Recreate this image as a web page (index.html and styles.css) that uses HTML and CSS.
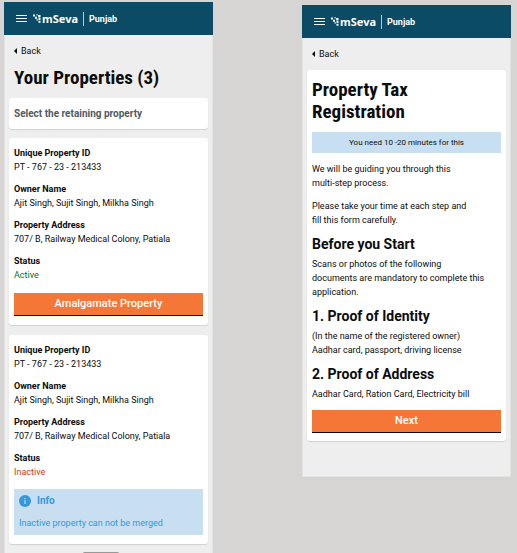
FILE: index.html
```html
<!DOCTYPE html>
<html lang="en">
<head>
<meta charset="utf-8">
<meta name="viewport" content="width=device-width, initial-scale=1">
<title>mSeva Punjab</title>
<link rel="stylesheet" href="styles.css">
</head>
<body>
<svg class="defs" aria-hidden="true">
  <symbol id="menu" viewBox="0 0 12 8"><path d="M0 0h11v1H0zM0 3h11v1H0zM0 6h11v1H0z"/></symbol>
  <symbol id="mark" viewBox="0 0 8 10"><path d="M0 .5h2v2H0zM2 2.800h2v2H2zM3.500.2h1.200v1.200H3.500zM5.200 1h2.300v2.400H5.200zM5.500 4.100h2v2h-2zM3.500 5.200h1.400v1.400H3.500zM5.500 6.800h2v2h-2z"/></symbol>
</svg>
<main class="board">
  <section class="phone">
    <header class="bar">
      <button class="menu" aria-label="Menu"><svg><use href="#menu"/></svg></button>
      <svg class="mark" aria-hidden="true"><use href="#mark"/></svg>
      <span class="brand">mSeva</span>
      <span class="state">Punjab</span>
    </header>
    <a class="back" href="#">Back</a>
    <h1 class="title page-title">Your Properties (3)</h1>
    <div class="card prompt">Select the retaining property</div>
    <article class="card">
      <dl class="details">
        <div><dt>Unique Property ID</dt><dd>PT - 767 - 23 - 213433</dd></div>
        <div><dt>Owner Name</dt><dd>Ajit Singh, Sujit Singh, Milkha Singh</dd></div>
        <div><dt>Property Address</dt><dd>707/ B, Railway Medical Colony, Patiala</dd></div>
        <div><dt>Status</dt><dd class="active">Active</dd></div>
      </dl>
      <button class="action">Amalgamate Property</button>
    </article>
    <article class="card">
      <dl class="details">
        <div><dt>Unique Property ID</dt><dd>PT - 767 - 23 - 213433</dd></div>
        <div><dt>Owner Name</dt><dd>Ajit Singh, Sujit Singh, Milkha Singh</dd></div>
        <div><dt>Property Address</dt><dd>707/ B, Railway Medical Colony, Patiala</dd></div>
        <div><dt>Status</dt><dd class="inactive">Inactive</dd></div>
      </dl>
      <div class="info">
        <div class="info-head">
          <svg viewBox="0 0 12 12" aria-hidden="true"><circle cx="6" cy="6" r="6" fill="#3498db"/><path d="M5.400 5.200h1.200V9H5.400zM5.400 3h1.200v1.200H5.400z" fill="#c7dff1"/></svg>
          <strong>Info</strong>
        </div>
        <p>Inactive property can not be merged</p>
      </div>
    </article>
    <div class="handle"></div>
  </section>

  <section class="phone guide">
    <header class="bar">
      <button class="menu" aria-label="Menu"><svg><use href="#menu"/></svg></button>
      <svg class="mark" aria-hidden="true"><use href="#mark"/></svg>
      <span class="brand">mSeva</span>
      <span class="state">Punjab</span>
    </header>
    <a class="back" href="#">Back</a>
    <article class="card">
      <h1 class="title">Property Tax Registration</h1>
      <p class="banner">You need 10 -20 minutes for this</p>
      <p class="intro">We will be guiding you through this<br>multi-step process.</p>
      <p class="intro">Please take your time at each step and<br>fill this form carefully.</p>
      <h2>Before you Start</h2>
      <p>Scans or photos of the following<br>documents are mandatory to complete this<br>application.</p>
      <h2>1. Proof of Identity</h2>
      <p>(In the name of the registered owner)<br>Aadhar card, passport, driving license</p>
      <h2>2. Proof of Address</h2>
      <p>Aadhar Card, Ration Card, Electricity bill</p>
      <button class="action">Next</button>
    </article>
  </section>
</main>
</body>
</html>
```
FILE: styles.css
```css
* { box-sizing: border-box; }
body {
  margin: 0;
  background: #d6d5d3;
  color: #0b0c0c;
  font: 9px/14px Roboto, sans-serif;
}
h1, h2, p, dl, dd { margin: 0; }
button { border: 0; padding: 0; font: inherit; color: inherit; }
.defs { display: none; }
.board {
  display: grid;
  grid-template-columns: 1fr 1fr;
  column-gap: 89px;
  align-items: start;
  height: 100vh;
  overflow: hidden;
  padding: 2px 6px 0 4px;
}
.phone {
  background: #eee;
  border: 1px solid #e3e3e2;
  border-top: 0;
}
.guide { margin-top: 3px; padding-bottom: 25px; }
.bar {
  display: flex;
  align-items: center;
  height: 33px;
  margin: 0 -1px;
  padding-left: 12px;
  background: #0b4b66;
  color: #fff;
}
.menu { width: 12px; height: 8px; background: none; display: flex; }
.menu svg { width: 12px; height: 8px; fill: #fff; }
.mark { width: 8px; height: 10px; margin-left: 5px; fill: #fff; }
.brand { margin-left: 1px; font: 700 11px/14px "Noto Sans", sans-serif; }
.state {
  margin-left: 5px;
  padding: 0 5px;
  border-left: 1px solid #b6c9d1;
  font-weight: 700;
}
.back {
  display: flex;
  align-items: center;
  gap: 4px;
  margin: 9px 9px 0;
  color: #0b0c0c;
  text-decoration: none;
}
.back::before {
  content: "";
  border: 3px solid transparent;
  border-right-color: #0b0c0c;
  border-left: 0;
}
.title {
  font: 700 19px/22px "Roboto Condensed", Roboto, sans-serif;
}
.page-title { margin: 9px 9px; }
.card {
  margin: 0 4px 10px;
  padding: 8px 5px 9px;
  background: #fff;
  border-radius: 3px;
  box-shadow: 0 1px 1px #d2d2d2;
}
.prompt {
  margin-bottom: 9px;
  padding: 8px 5px;
  color: #505a5f;
  font-size: 10px;
  line-height: 15px;
  font-weight: 700;
}
.details { display: grid; gap: 8px; }
dt { font-weight: 700; }
.active { color: #00703c; }
.inactive { color: #d4351c; }
.action {
  display: block;
  width: 100%;
  height: 23px;
  margin-top: 11px;
  background: #f47738;
  border-bottom: 1px solid #0b0c0c;
  color: #fff;
  font-size: 11px;
  font-weight: 500;
}
.info {
  margin-top: 10px;
  padding: 5px;
  background: #c7dff1;
  color: #3498db;
}
.info-head { display: flex; align-items: center; gap: 6px; font-size: 10px; margin-bottom: 8px; }
.info-head svg { width: 12px; height: 12px; }
.handle {
  width: 36px;
  height: 3px;
  margin: -2px auto 0 78px;
  border-radius: 2px;
  background: #999;
}
.guide .back { margin-bottom: 9px; }
.guide .card { padding: 9px 5px 8px; }
.guide .title { margin-bottom: 9px; padding-right: 40px; }
.banner {
  margin-bottom: 9px;
  background: #c7dff1;
  font-size: 8px;
  line-height: 21px;
  text-align: center;
}
.intro { margin-bottom: 9px; }
h2 { margin: 9px 0 5px; font-size: 14px; line-height: 16px; }
.guide .action { margin-top: 9px; }
```
